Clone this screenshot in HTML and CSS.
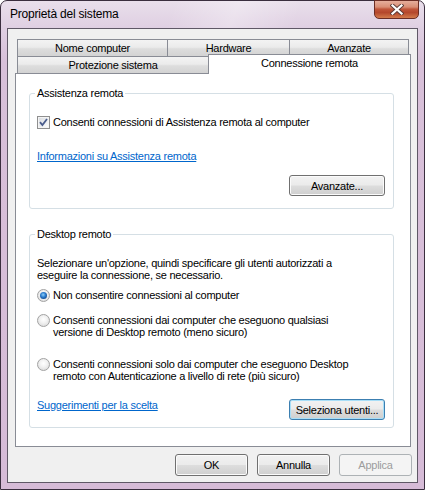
FILE: index.html
```html
<!DOCTYPE html>
<html lang="it">
<head>
    <meta charset="UTF-8">
    <title>Proprietà del sistema</title>
    <link rel="stylesheet" href="styles.css">
</head>
<body>
    <div class="window">
        <!-- Title bar -->
        <div class="titlebar">
            <span class="title">Proprietà del sistema</span>
            <div class="close">
                <svg width="14" height="11" viewBox="0 0 14 11">
                    <path d="M2.5 1.5 L11.5 9.5 M11.5 1.5 L2.5 9.5" stroke="#5a3a36" stroke-width="4" stroke-linecap="square" fill="none"/>
                    <path d="M2.5 1.5 L11.5 9.5 M11.5 1.5 L2.5 9.5" stroke="#ffffff" stroke-width="2.2" stroke-linecap="square" fill="none"/>
                </svg>
            </div>
        </div>

        <div class="client">
            <!-- Tabs -->
            <div class="tabs">
                <div class="tab-row">
                    <div class="tab tab-nome">Nome computer</div>
                    <div class="tab tab-hw">Hardware</div>
                    <div class="tab tab-adv">Avanzate</div>
                </div>
                <div class="tab-row">
                    <div class="tab tab-prot">Protezione sistema</div>
                    <div class="tab tab-active">Connessione remota</div>
                </div>
            </div>

            <div class="panel">
                <fieldset class="group group-assist">
                    <legend>Assistenza remota</legend>
                    <div class="option">
                        <span class="checkbox">
                            <svg width="9" height="9" viewBox="0 0 9 9">
                                <path d="M1 4.2 L3.4 7 L8 1" stroke="#4a5c8c" stroke-width="1.8" fill="none"/>
                            </svg>
                        </span>
                        <span>Consenti connessioni di Assistenza remota al computer</span>
                    </div>
                    <a class="link link-info" href="#">Informazioni su Assistenza remota</a>
                    <div class="button-row">
                        <button class="btn btn-panel">Avanzate...</button>
                    </div>
                </fieldset>

                <fieldset class="group group-desktop">
                    <legend>Desktop remoto</legend>
                    <p class="hint">Selezionare un'opzione, quindi specificare gli utenti autorizzati a<br>eseguire la connessione, se necessario.</p>
                    <div class="option radio-1">
                        <span class="radio selected"></span>
                        <span>Non consentire connessioni al computer</span>
                    </div>
                    <div class="option radio-2">
                        <span class="radio"></span>
                        <span class="multi">Consenti connessioni dai computer che eseguono qualsiasi<br>versione di Desktop remoto (meno sicuro)</span>
                    </div>
                    <div class="option radio-3">
                        <span class="radio"></span>
                        <span class="multi">Consenti connessioni solo dai computer che eseguono Desktop<br>remoto con Autenticazione a livello di rete (più sicuro)</span>
                    </div>
                    <div class="button-row spread">
                        <a class="link" href="#">Suggerimenti per la scelta</a>
                        <button class="btn btn-panel btn-default">Seleziona utenti...</button>
                    </div>
                </fieldset>
            </div>

            <!-- Dialog buttons -->
            <div class="actions">
                <button class="btn btn-action">OK</button>
                <button class="btn btn-action">Annulla</button>
                <button class="btn btn-action" disabled>Applica</button>
            </div>
        </div>
    </div>
</body>
</html>
```

FILE: styles.css
```css
body {
    margin: 0;
    background: #ffffff;
    font-family: "Liberation Sans", Arial, sans-serif;
    font-size: 11px;
    line-height: 13px;
    letter-spacing: -0.25px;
    color: #000;
}

.window {
    width: 425px;
    height: 490px;
    box-sizing: border-box;
    border: 1px solid #3a2e3e;
    border-radius: 7px 7px 0 0;
    background: linear-gradient(180deg, #e9dfeb 0, #dfcfe2 27px, #d8c0d9 60px, #d6bbd7 100%);
    display: flex;
    flex-direction: column;
}

.titlebar {
    height: 27px;
    display: flex;
    justify-content: space-between;
    align-items: flex-start;
    padding: 0 5px 0 9px;
    background: linear-gradient(110deg, rgba(255,255,255,0) 40%, rgba(255,255,255,0.3) 55%, rgba(255,255,255,0) 70%);
}

.title {
    font-size: 12px;
    line-height: 27px;
    letter-spacing: -0.2px;
}

.close {
    width: 45px;
    height: 19px;
    box-sizing: border-box;
    margin-top: -1px;
    border: 1px solid #6b2d25;
    border-radius: 0 0 5px 5px;
    background: linear-gradient(180deg, #e6ae9c 0%, #d98e76 35%, #c0553a 48%, #b4472c 68%, #d37b4c 100%);
    display: flex;
    align-items: center;
    justify-content: center;
}

.client {
    flex: 1;
    margin: 0 6px 6px 6px;
    border: 1px solid #5f5866;
    background: #f0f0f0;
    padding: 10px 6px 6px 7px;
    display: flex;
    flex-direction: column;
}

/* Tabs */
.tabs {
    display: flex;
    flex-direction: column;
}

.tab-row {
    display: flex;
    align-items: flex-start;
    height: 17px;
}

.tab {
    box-sizing: border-box;
    height: 17px;
    border: 1px solid #898c95;
    border-bottom: none;
    background: linear-gradient(180deg, #f3f3f3 0%, #ebebeb 45%, #dddddd 55%, #d3d3d3 100%);
    text-align: center;
    line-height: 16px;
    margin-left: -1px;
}

.tab-nome { width: 151px; margin-left: 2px; }
.tab-hw { width: 123px; }
.tab-adv { width: 120px; }
.tab-prot { width: 192px; margin-left: 2px; }

.tab-active {
    position: relative;
    z-index: 2;
    width: 203px;
    height: 20px;
    margin-top: -2px;
    background: #ffffff;
    line-height: 17px;
}

.panel {
    flex: 1;
    border: 1px solid #898c95;
    background: #ffffff;
    display: flex;
    flex-direction: column;
}

/* Group boxes */
.group {
    margin: 13px 16px 0 13px;
    border: 1px solid #d5dfe5;
    border-radius: 3px;
    padding: 16px 8px 12px 7px;
    min-width: 0;
}

.group legend {
    padding: 0 2px;
    margin-left: -2px;
    line-height: 13px;
}

.group-desktop {
    margin-top: 19px;
    padding-bottom: 7px;
}

.option {
    display: flex;
    align-items: flex-start;
    gap: 3px;
}

.multi {
    line-height: 12px;
}

.checkbox {
    width: 13px;
    height: 13px;
    box-sizing: border-box;
    border: 1px solid #8f8f8f;
    background: linear-gradient(135deg, #d8dade 0%, #eef0f2 60%, #ffffff 100%);
    box-shadow: inset 0 0 0 1px #f4f4f4;
    display: flex;
    align-items: center;
    justify-content: center;
    flex-shrink: 0;
}

.radio {
    width: 13px;
    height: 13px;
    box-sizing: border-box;
    border-radius: 50%;
    border: 1px solid #a2a2a2;
    background: radial-gradient(circle at 50% 40%, #ffffff 0%, #f2f2f2 40%, #d4d4d4 100%);
    flex-shrink: 0;
    display: flex;
    align-items: center;
    justify-content: center;
}

.radio.selected::after {
    content: "";
    width: 7px;
    height: 7px;
    border-radius: 50%;
    background: radial-gradient(circle at 45% 40%, #8fd0f8 0%, #2f7fd0 40%, #124d94 75%, #4b8fcf 100%);
}

.link {
    display: block;
    color: #0066cc;
    text-decoration: underline;
    align-self: flex-start;
}

.link-info {
    margin-top: 21px;
}

.button-row {
    display: flex;
    justify-content: flex-end;
    align-items: center;
    margin-top: 12px;
}

.button-row.spread {
    justify-content: space-between;
    margin-top: 17px;
}

.hint {
    margin: 0;
    line-height: 12px;
}

.radio-1 { margin-top: 8px; }
.radio-2 { margin-top: 12px; }
.radio-3 { margin-top: 20px; }

/* Buttons */
.btn {
    font-family: inherit;
    font-size: 11px;
    letter-spacing: -0.25px;
    color: #000;
    box-sizing: border-box;
    border: 1px solid #707070;
    border-radius: 3px;
    background: linear-gradient(180deg, #f2f2f2 0%, #ebebeb 48%, #dddddd 52%, #cfcfcf 100%);
    box-shadow: inset 0 0 0 1px #fbfbfb;
    padding: 0;
    margin: 0;
}

.btn-panel {
    width: 96px;
    height: 21px;
}

.btn-default {
    border-color: #3c7fb1;
    box-shadow: inset 0 0 0 1px #a8def7;
}

.actions {
    display: flex;
    justify-content: flex-end;
    gap: 9px;
    margin: 7px -1px 0 0;
}

.btn-action {
    width: 73px;
    height: 22px;
}

.btn:disabled {
    border-color: #adb2b5;
    background: #f4f4f4;
    box-shadow: none;
    color: #9c9c9c;
}
```
